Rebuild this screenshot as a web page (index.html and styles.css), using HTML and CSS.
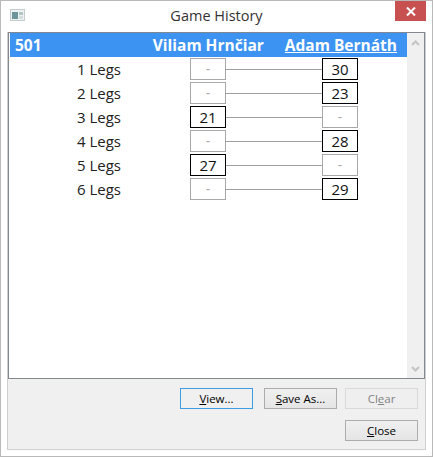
FILE: index.html
```html
<!DOCTYPE html>
<html lang="en">
<head>
    <meta charset="UTF-8">
    <meta name="viewport" content="width=device-width, initial-scale=1.0">
    <title>Game History</title>
    <link rel="stylesheet" href="styles.css">
</head>
<body>
    <div class="window">
        <div class="titlebar">
            <svg class="app-icon" width="15" height="12" viewBox="0 0 15 12">
                <rect x="0.5" y="0.5" width="14" height="11" fill="#eef2f2" stroke="#c4cccc"/>
                <rect x="2" y="3" width="6" height="7" fill="#6d949b"/>
                <rect x="9" y="3" width="4" height="3" fill="#b4c4c7"/>
                <rect x="9" y="7" width="4" height="3" fill="#d3dcde"/>
            </svg>
            <div class="window-title">Game History</div>
            <div class="close-x">
                <svg width="10" height="9" viewBox="0 0 10 9">
                    <path d="M1 0.5 L9 8.5 M9 0.5 L1 8.5" stroke="#fff" stroke-width="2" fill="none"/>
                </svg>
            </div>
        </div>

        <div class="client">
            <div class="list-box">
                <div class="list-main">
                    <div class="list-header">
                        <div class="game-type">501</div>
                        <div class="player">Viliam Hrnčiar</div>
                        <div class="player current">Adam Bernáth</div>
                    </div>

                    <div class="leg-row">
                        <div class="leg-label">1 Legs</div>
                        <div class="score empty">-</div>
                        <div class="connector"></div>
                        <div class="score">30</div>
                    </div>
                    <div class="leg-row">
                        <div class="leg-label">2 Legs</div>
                        <div class="score empty">-</div>
                        <div class="connector"></div>
                        <div class="score">23</div>
                    </div>
                    <div class="leg-row">
                        <div class="leg-label">3 Legs</div>
                        <div class="score">21</div>
                        <div class="connector"></div>
                        <div class="score empty">-</div>
                    </div>
                    <div class="leg-row">
                        <div class="leg-label">4 Legs</div>
                        <div class="score empty">-</div>
                        <div class="connector"></div>
                        <div class="score">28</div>
                    </div>
                    <div class="leg-row">
                        <div class="leg-label">5 Legs</div>
                        <div class="score">27</div>
                        <div class="connector"></div>
                        <div class="score empty">-</div>
                    </div>
                    <div class="leg-row">
                        <div class="leg-label">6 Legs</div>
                        <div class="score empty">-</div>
                        <div class="connector"></div>
                        <div class="score">29</div>
                    </div>
                </div>

                <div class="scrollbar">
                    <svg width="9" height="6" viewBox="0 0 9 6">
                        <path d="M1 5 L4.5 1.5 L8 5" stroke="#c4c4c4" stroke-width="2" fill="none"/>
                    </svg>
                    <svg width="9" height="6" viewBox="0 0 9 6">
                        <path d="M1 1 L4.5 4.5 L8 1" stroke="#c4c4c4" stroke-width="2" fill="none"/>
                    </svg>
                </div>
            </div>

            <div class="button-row">
                <button class="btn default"><u>V</u>iew...</button>
                <button class="btn"><u>S</u>ave As...</button>
                <button class="btn" disabled>Cl<u>e</u>ar</button>
            </div>
            <div class="button-row">
                <button class="btn"><u>C</u>lose</button>
            </div>
        </div>
    </div>
</body>
</html>
```

FILE: styles.css
```css
* {
    margin: 0;
    padding: 0;
    box-sizing: border-box;
}

body {
    width: 433px;
    height: 457px;
    overflow: hidden;
    font-family: 'Open Sans', 'Noto Sans', sans-serif;
    background: #fff;
    color: #000;
}

.window {
    width: 433px;
    height: 457px;
    border: 1px solid #b9b9b9;
    background: #fff;
    display: flex;
    flex-direction: column;
}

.titlebar {
    position: relative;
    height: 31px;
    flex: none;
}

.app-icon {
    position: absolute;
    left: 9px;
    top: 8px;
}

.window-title {
    text-align: center;
    font-size: 14.5px;
    line-height: 20px;
    padding-top: 5px;
    color: #333;
}

.close-x {
    position: absolute;
    right: 6px;
    top: 0;
    width: 31px;
    height: 20px;
    background: #c75050;
    display: flex;
    align-items: center;
    justify-content: center;
}

.client {
    flex: 1;
    margin: 0 6px 6px 6px;
    border: solid #cfcfcf;
    border-width: 0 1px 1px 1px;
    background: #f0f0f0;
    display: flex;
    flex-direction: column;
}

.list-box {
    height: 347px;
    flex: none;
    border: 1px solid #828790;
    background: #fff;
    padding: 0 0 0 1px;
    display: flex;
}

.list-main {
    flex: 1;
}

.list-header {
    height: 24px;
    background: #3c93f2;
    color: #fff;
    font-size: 15.5px;
    font-weight: bold;
    line-height: 24px;
    display: flex;
    gap: 21px;
    padding: 0 10px 0 5px;
}

.game-type {
    flex: 1;
}

.current {
    text-decoration: underline;
}

.leg-row {
    display: grid;
    grid-template-columns: 180px 36px 96px 36px;
    align-items: center;
    height: 24px;
    padding: 1px 0;
}

.leg-label {
    text-align: center;
    font-size: 15px;
    padding-right: 2px;
    color: #222;
}

.score {
    height: 22px;
    border: 1px solid #000;
    background: #fff;
    text-align: center;
    font-size: 15px;
    line-height: 20px;
    color: #111;
}

.score.empty {
    border-color: #a8a8a8;
    color: #aaa;
    font-size: 14px;
}

.connector {
    border-top: 1px solid #a0a0a0;
}

.scrollbar {
    width: 17px;
    background: #f0f0f0;
    display: flex;
    flex-direction: column;
    align-items: center;
    justify-content: space-between;
    padding: 7px 0 6px 0;
}

.button-row {
    display: flex;
    justify-content: flex-end;
    gap: 8px;
    padding: 9px 7px 0 0;
}

.button-row + .button-row {
    padding-top: 11px;
}

.btn {
    width: 73px;
    height: 21px;
    font-family: 'Open Sans', sans-serif;
    font-size: 11.5px;
    color: #000;
    background: linear-gradient(#f0f0f0, #e5e5e5);
    border: 1px solid #acacac;
}

.btn.default {
    border-color: #3c9ee0;
    background: #f0f0f0;
    margin-right: 3px;
}

.btn:disabled {
    color: #838383;
    border-color: #d9d9d9;
    background: #efefef;
}
```
